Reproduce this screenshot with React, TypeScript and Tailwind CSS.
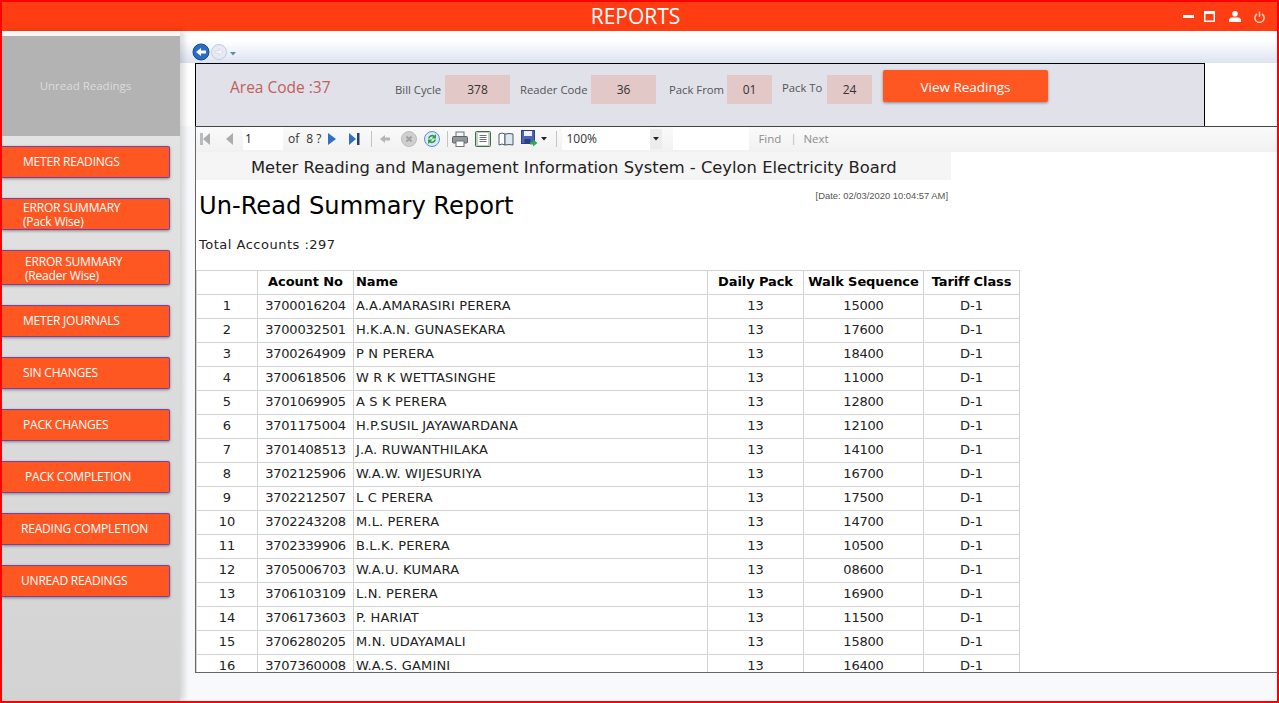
const buttons = [
  { text: 'METER READINGS', pl: 'pl-[21px]', mt: 'mt-[10px]', h: 'h-[32px]', pt: '' },
  { text: 'ERROR SUMMARY\n(Pack Wise)', pl: 'pl-[21px]', mt: 'mt-[20px]', h: 'h-[32px]', pt: 'pt-[2px]' },
  { text: 'ERROR SUMMARY\n(Reader Wise)', pl: 'pl-[23px]', mt: 'mt-[20px]', h: 'h-[35px]', pt: 'pt-[2px]' },
  { text: 'METER JOURNALS', pl: 'pl-[21px]', mt: 'mt-[20px]', h: 'h-[32px]', pt: '' },
  { text: 'SIN CHANGES', pl: 'pl-[21px]', mt: 'mt-[20px]', h: 'h-[32px]', pt: '' },
  { text: 'PACK CHANGES', pl: 'pl-[21px]', mt: 'mt-[20px]', h: 'h-[32px]', pt: '' },
  { text: 'PACK COMPLETION', pl: 'pl-[23px]', mt: 'mt-[20px]', h: 'h-[32px]', pt: '' },
  { text: 'READING COMPLETION', pl: 'pl-[19px]', mt: 'mt-[20px]', h: 'h-[32px]', pt: '' },
  { text: 'UNREAD READINGS', pl: 'pl-[19px]', mt: 'mt-[20px]', h: 'h-[32px]', pt: '' },
];

const rows = [
  ['3700016204', 'A.A.AMARASIRI PERERA', '15000'],
  ['3700032501', 'H.K.A.N. GUNASEKARA', '17600'],
  ['3700264909', 'P N PERERA', '18400'],
  ['3700618506', 'W R K WETTASINGHE', '11000'],
  ['3701069905', 'A S K PERERA', '12800'],
  ['3701175004', 'H.P.SUSIL JAYAWARDANA', '12100'],
  ['3701408513', 'J.A. RUWANTHILAKA', '14100'],
  ['3702125906', 'W.A.W. WIJESURIYA', '16700'],
  ['3702212507', 'L C PERERA', '17500'],
  ['3702243208', 'M.L. PERERA', '14700'],
  ['3702339906', 'B.L.K. PERERA', '10500'],
  ['3705006703', 'W.A.U. KUMARA', '08600'],
  ['3706103109', 'L.N. PERERA', '16900'],
  ['3706173603', 'P. HARIAT', '11500'],
  ['3706280205', 'M.N. UDAYAMALI', '15800'],
  ['3707360008', 'W.A.S. GAMINI', '16400'],
];

const fields = [
  { label: 'Bill Cycle', value: '378', ml: 'ml-[66px]', lw: 'w-[47px]', w: 'w-[65px]', gap: 'ml-[3px]', shift: 'translate-y-[1px]' },
  { label: 'Reader Code', value: '36', ml: 'ml-[10px]', lw: 'w-[68px]', w: 'w-[65px]', gap: 'ml-[3px]', shift: 'translate-y-[1px]' },
  { label: 'Pack From', value: '01', ml: 'ml-[13px]', lw: 'w-[55px]', w: 'w-[45px]', gap: 'ml-[3px]', shift: 'translate-y-[1px]' },
  { label: 'Pack To', value: '24', ml: 'ml-[10px]', lw: 'w-[41px]', w: 'w-[45px]', gap: 'ml-[4px]', shift: '-translate-y-[1px]' },
];

function NavArrow({ last, first, disabled }: { last?: boolean; first?: boolean; disabled?: boolean }) {
  const fill = disabled ? '#a9adb0' : '#2f6fc6';
  return (
    <svg width="12" height="16" viewBox="0 0 12 16">
      {first ? <rect x="0" y="2" width="3" height="12" fill="#b9bcbf" /> : null}
      {disabled ? (
        <polygon points="10,2 10,14 3,8" fill={fill} />
      ) : (
        <polygon points={last ? '1,2 1,14 8,8' : '2,2 2,14 10,8'} fill={fill} />
      )}
      {last ? <rect x="9" y="2" width="2.5" height="12" fill="#2a3f7a" /> : null}
    </svg>
  );
}

function Toolbar() {
  return (
    <div className="h-[25px] pb-[2px] flex items-center bg-gradient-to-b from-[#fafafa] to-[#f1f1f1] text-[12px] text-[#333] font-['Open_Sans',sans-serif]">
      <div className="ml-[4px]"><NavArrow first disabled /></div>
      <div className="ml-[11px]"><NavArrow disabled /></div>
      <div className="ml-[8px] w-[40px] h-[23px] bg-white flex items-center pl-[2px] text-[#222]">1</div>
      <span className="ml-[5px]">of</span>
      <span className="ml-[7px]">8 ?</span>
      <div className="ml-[5px]"><NavArrow /></div>
      <div className="ml-[10px]"><NavArrow last /></div>
      <div className="ml-[11px] w-px h-[16px] bg-[#c4c4c4]" />
      <svg className="ml-[7px]" width="12" height="12" viewBox="0 0 12 12">
        <path d="M1 6 L6 2 V4.5 H11 V7.5 H6 V10 Z" fill="#b3b7b8" />
      </svg>
      <svg className="ml-[10px]" width="16" height="16" viewBox="0 0 16 16">
        <circle cx="8" cy="8" r="7.5" fill="#cfcfcf" stroke="#bdbdbd" />
        <path d="M5.5 5.5 L10.5 10.5 M10.5 5.5 L5.5 10.5" stroke="#a2a2a2" strokeWidth="2" />
      </svg>
      <svg className="ml-[7px]" width="16" height="16" viewBox="0 0 16 16">
        <circle cx="8" cy="8" r="7.5" fill="#d9e8f7" stroke="#5c8fc4" />
        <path d="M4 7.5 A4.2 4.2 0 0 1 10.5 4.5 L12 3 V7.5 H7.5 L9.3 5.8 A2.6 2.6 0 0 0 5.6 7.5 Z" fill="#2f9e44" />
        <path d="M12 8.5 A4.2 4.2 0 0 1 5.5 11.5 L4 13 V8.5 H8.5 L6.7 10.2 A2.6 2.6 0 0 0 10.4 8.5 Z" fill="#2f9e44" />
      </svg>
      <div className="ml-[7px] w-px h-[16px] bg-[#c4c4c4]" />
      <svg className="ml-[4px]" width="16" height="16" viewBox="0 0 16 16">
        <rect x="4" y="1" width="8" height="5" fill="#f4f4f4" stroke="#6d7378" />
        <rect x="0.5" y="5.5" width="15" height="6.5" rx="1" fill="#8f979d" stroke="#5d6469" />
        <rect x="4" y="10" width="8" height="5.5" fill="#fff" stroke="#6d7378" />
      </svg>
      <svg className="ml-[7px]" width="16" height="16" viewBox="0 0 16 16">
        <rect x="0.5" y="0.5" width="15" height="15" rx="1" fill="#bcd3bf" stroke="#44664f" />
        <rect x="3" y="2" width="10" height="12" fill="#fff" />
        <path d="M4.5 4.5 H11.5 M4.5 6.5 H11.5 M4.5 8.5 H11.5 M4.5 10.5 H11.5" stroke="#66707a" />
      </svg>
      <svg className="ml-[7px]" width="16" height="16" viewBox="0 0 16 16">
        <path d="M1 3 Q4 1 7 3 V14 Q4 12 1 14 Z" fill="#fff" stroke="#4d5a66" />
        <path d="M7 3 Q11 2 15 3 V14 Q11 13 7 14 Z" fill="#dfe8f2" stroke="#4d5a66" />
      </svg>
      <svg className="ml-[7px]" width="17" height="17" viewBox="0 0 17 17">
        <rect x="0.5" y="0.5" width="13" height="13" fill="#4a66b8" stroke="#2c3f80" />
        <rect x="3" y="1" width="8" height="5" fill="#eef2fa" />
        <rect x="3.5" y="9" width="6" height="4.5" fill="#2c3f80" />
        <path d="M9 12 H12 V9.5 L16.5 13 L12 16.5 V14.5 H9 Z" fill="#2fa84f" />
      </svg>
      <svg className="ml-[3px]" width="6" height="4" viewBox="0 0 6 4"><polygon points="0,0 6,0 3,3.5" fill="#222" /></svg>
      <div className="ml-[9px] w-px h-[16px] bg-[#c4c4c4]" />
      <div className="ml-[5px] w-[88px] h-[23px] bg-white flex items-center pl-[4px] text-[#333]">100%</div>
      <div className="w-[12px] h-[20px] bg-[#ececec] flex items-center justify-center">
        <svg width="6" height="4" viewBox="0 0 6 4"><polygon points="0,0 6,0 3,3.5" fill="#222" /></svg>
      </div>
      <div className="ml-[11px] w-[76px] h-[23px] bg-white" />
      <span className="ml-[9px] text-[11.5px] text-[#8e8e8e]">Find</span>
      <span className="ml-[9px] text-[#b8b8b8] text-[11px]">|</span>
      <span className="ml-[7px] text-[11.5px] text-[#8e8e8e]">Next</span>
    </div>
  );
}

function ReportTable() {
  const cell = 'border border-[#d3d3d3] h-[24px] p-0 pb-[2px] whitespace-nowrap';
  return (
    <table className="mt-[16px] border-collapse table-fixed w-[823px] text-[13px] text-[#222] font-['DejaVu_Sans',Verdana,sans-serif]">
      <colgroup>
        <col className="w-[61px]" />
        <col className="w-[96px]" />
        <col className="w-[354px]" />
        <col className="w-[96px]" />
        <col className="w-[120px]" />
        <col className="w-[96px]" />
      </colgroup>
      <thead>
        <tr className="font-bold text-black text-[13px] tracking-[-0.1px]">
          <th className={cell} />
          <th className={`${cell} text-center`}>Acount No</th>
          <th className={`${cell} text-left pl-[2px]`}>Name</th>
          <th className={`${cell} text-center`}>Daily Pack</th>
          <th className={`${cell} text-center`}>Walk Sequence</th>
          <th className={`${cell} text-center`}>Tariff Class</th>
        </tr>
      </thead>
      <tbody>
        {rows.map((r, i) => (
          <tr key={r[0]}>
            <td className={`${cell} text-center`}>{i + 1}</td>
            <td className={`${cell} text-center tracking-[-0.2px]`}>{r[0]}</td>
            <td className={`${cell} pl-[2px] tracking-[0.15px]`}>{r[1]}</td>
            <td className={`${cell} text-center`}>13</td>
            <td className={`${cell} text-center tracking-[-0.2px]`}>{r[2]}</td>
            <td className={`${cell} text-center`}>D-1</td>
          </tr>
        ))}
      </tbody>
    </table>
  );
}

export default function App() {
  return (
    <div className="w-[1279px] h-[703px] overflow-hidden border-2 border-[#ff0000] flex flex-col bg-white font-['Open_Sans',sans-serif]">
      <header className="h-[29px] shrink-0 bg-[#ff3d12] relative flex items-center justify-center pr-[8px] text-white text-[21px] leading-none">
        REPORTS
        <div className="absolute right-[12px] top-0 bottom-0 flex items-center">
          <svg width="11" height="11" viewBox="0 0 11 11"><rect x="0" y="4" width="11" height="3" fill="#fff" /></svg>
          <svg className="ml-[10px]" width="11" height="11" viewBox="0 0 11 11">
            <path d="M0 0 H11 V11 H0 Z M1.5 3 V9.5 H9.5 V3 Z" fill="#fff" fillRule="evenodd" />
          </svg>
          <svg className="ml-[14px]" width="12" height="11" viewBox="0 0 12 11">
            <circle cx="6" cy="2.8" r="2.8" fill="#fff" />
            <path d="M0 11 V9.5 Q0 7 3 6.6 H9 Q12 7 12 9.5 V11 Z" fill="#fff" />
          </svg>
          <svg className="ml-[13px]" width="11" height="12" viewBox="0 0 11 12" fill="none" stroke="#ffd0c0" strokeWidth="1.5">
            <path d="M3 3 A4.6 4.6 0 1 0 8 3" />
            <path d="M5.5 0.5 V6" />
          </svg>
        </div>
      </header>

      <div className="flex-1 flex min-h-0">
        <aside className="w-[178px] shrink-0 pt-[5px] bg-gradient-to-b from-[#f8f8f8] via-[#e3e3e3] via-[15%] to-[#d3d3d3] shadow-[4px_0_6px_rgba(0,0,0,0.15)] z-10">
          <div className="h-[100px] bg-[#b3b3b3] flex items-center justify-center pr-[11px] text-[11.5px] text-[#dcdcdc]">
            Unread Readings
          </div>
          {buttons.map((b) => (
            <div
              key={b.text}
              className={`${b.mt} ${b.h} ${b.pl} ${b.pt} w-[168px] bg-[#ff5722] text-white text-[12px] leading-[14px] rounded-r-[2px] border-y border-r border-[#7b3fa0] shadow-[0_1px_3px_rgba(0,0,0,0.4)] flex flex-col justify-center tracking-[-0.2px] whitespace-pre`}
            >
              {b.text}
            </div>
          ))}
        </aside>

        <main className="flex-1 min-w-0 flex flex-col bg-[#f8f9fa]">
          <div className="h-[32px] shrink-0 flex items-end pl-[12px] pb-[2px] bg-gradient-to-b from-white from-[30%] to-[#dde3f1]">
            <svg width="18" height="18" viewBox="0 0 18 18">
              <circle cx="9" cy="9" r="8" fill="#2b6cc4" stroke="#174a94" />
              <path d="M4 9 L9 5 V7.5 H14 V10.5 H9 V13 Z" fill="#fff" />
            </svg>
            <svg className="ml-[1px] mb-[1px]" width="16" height="16" viewBox="0 0 16 16">
              <circle cx="8" cy="8" r="7.5" fill="#e6eaf4" stroke="#c3cbdc" />
              <path d="M12 8 L8 4.5 V6.8 H4 V9.2 H8 V11.5 Z" fill="#f6f7fb" stroke="#c3cbdc" strokeWidth="0.5" />
            </svg>
            <svg className="ml-[3px] mb-[5px]" width="6" height="4" viewBox="0 0 6 4"><polygon points="0,0 6,0 3,3.5" fill="#5b8ea6" /></svg>
          </div>

          <div className="shrink-0 flex bg-white">
            <div className="ml-[15px] w-[1010px] h-[63px] border border-b-0 border-black bg-[#e0e1e9] flex items-start text-[11.3px] text-[#555]">
              <div className="ml-[34px] w-[99px] mt-[12px] text-[15.5px] leading-[22px] text-[#c0605a] whitespace-nowrap">Area Code :37</div>
              {fields.map((f) => (
                <div key={f.label} className={`${f.ml} mt-[11px] flex items-center`}>
                  <span className={`${f.lw} whitespace-nowrap ${f.shift}`}>{f.label}</span>
                  <span className={`${f.gap} ${f.w} h-[29px] bg-[#e3c8c8] text-[12px] text-[#333] flex items-center justify-center`}>{f.value}</span>
                </div>
              ))}
              <div className="ml-[11px] mt-[6px] w-[165px] h-[32px] pt-[3px] rounded-[2px] bg-[#ff5722] text-white text-[13.5px] flex items-center justify-center shadow-[0_1px_3px_rgba(0,0,0,0.4)]">
                View Readings
              </div>
            </div>
          </div>

          <div className="ml-[15px] h-[547px] shrink-0 border-t border-l border-b border-t-[#444] border-l-[#666] border-b-[#666] bg-white overflow-hidden">
            <Toolbar />
            <div className="w-[755px] h-[28px] pt-[4px] bg-[#f5f5f5] flex items-center pl-[55px] text-[16.35px] text-[#222] font-['DejaVu_Sans',Verdana,sans-serif] whitespace-nowrap">
              Meter Reading and Management Information System - Ceylon Electricity Board
            </div>
            <div className="w-[755px] relative">
              <div className="absolute right-[3px] top-[9px] text-[9.4px] text-[#555] font-['Liberation_Sans',sans-serif] whitespace-nowrap">[Date: 02/03/2020 10:04:57 AM]</div>
              <div className="pl-[3px] pt-[10px] text-[24.15px] leading-[32px] text-black font-['DejaVu_Sans',Verdana,sans-serif]">Un-Read Summary Report</div>
              <div className="pl-[3px] mt-[14px] text-[13px] leading-[18px] tracking-[0.5px] text-[#222] font-['DejaVu_Sans',Verdana,sans-serif]">Total Accounts :297</div>
            </div>
            <ReportTable />
          </div>
        </main>
      </div>
    </div>
  );
}
